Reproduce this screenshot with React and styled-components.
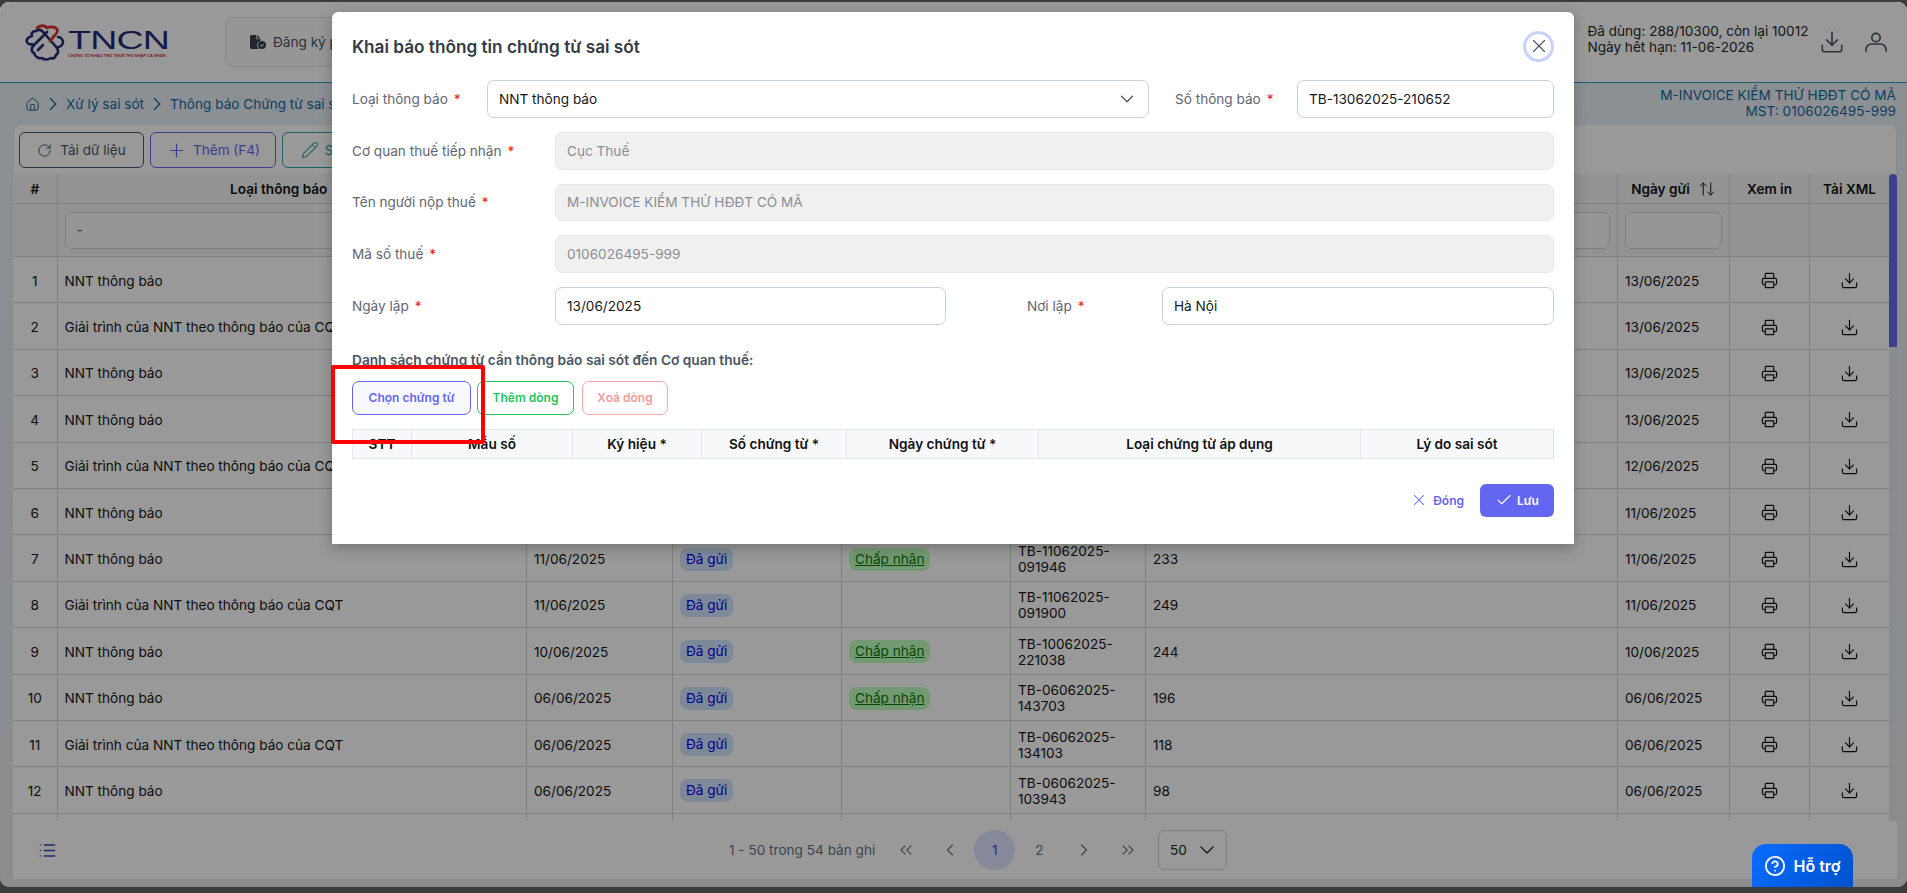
import React from 'react';
import styled, { createGlobalStyle } from 'styled-components';
import {
  Check, ChevronDown, ChevronLeft, ChevronRight, ChevronsLeft, ChevronsRight, CircleHelp,
  Download, House, List, Pencil, Plus, Printer, RotateCw, X, ArrowUpDown,
} from 'lucide-react';
import { FaFileCircleCheck } from 'react-icons/fa6';

const GlobalStyle = createGlobalStyle`
  html, body {
    margin: 0;
    height: 100%;
    background: #3b3c3d;
    overflow: hidden;
  }
  * { box-sizing: border-box; }
  body {
    font-family: Inter, "Noto Sans", sans-serif;
    font-size: 13.6px;
    color: #1a1a1a;
  }
`;

const Frame = styled.div`
  height: 893px;
  padding: 2px 0 6px;
`;

const Page = styled.div`
  position: relative;
  height: 885px;
  border-radius: 9px;
  overflow: hidden;
  display: flex;
  flex-direction: column;
  background: linear-gradient(180deg, #e9f1f8 0%, #e8edf0 40%, #e6eaec 100%);
`;

const Header = styled.header`
  height: 81px;
  flex-shrink: 0;
  background: #fff;
  border-bottom: 1px solid #2f9fd8;
  display: flex;
  align-items: flex-start;
  padding: 15px 18px 0 25px;
`;

const Logo = styled.div`
  width: 200px;
  height: 40px;
  margin-top: 6px;
  display: flex;
  gap: 3px;
`;

const LogoWords = styled.div`
  display: flex;
  flex-direction: column;
  margin-top: 6px;
`;

const LogoName = styled.span`
  font-family: "Liberation Sans", sans-serif;
  font-size: 25px;
  line-height: 22px;
  letter-spacing: -0.5px;
  color: #262a78;
  display: inline-block;
  transform: scaleX(1.5);
  transform-origin: left center;
`;

const LogoSlogan = styled.span`
  font-family: "Liberation Sans", sans-serif;
  font-size: 4px;
  font-weight: 700;
  line-height: 6px;
  margin-top: 2px;
  color: #d8322f;
  white-space: nowrap;
`;

const NavButton = styled.div`
  width: 320px;
  height: 50px;
  border: 1px solid #dfe2e7;
  border-radius: 8px;
  background: #fafafa;
  display: flex;
  align-items: center;
  padding-left: 24px;
  gap: 7px;
  color: #4b5563;
  white-space: nowrap;
  svg { color: #374151; }
`;

const UsageInfo = styled.div`
  margin-left: auto;
  margin-top: 5.5px;
  line-height: 16px;
  color: #26282b;
`;

const HeaderIcons = styled.div`
  display: flex;
  gap: 18px;
  margin: 12px 0 0 10.5px;
  color: #4b5563;
`;

const BreadcrumbBar = styled.div`
  height: 41px;
  flex-shrink: 0;
  display: flex;
  align-items: center;
  justify-content: space-between;
  padding: 0 11px 0 25px;
  color: #16699e;
`;

const Crumbs = styled.nav`
  display: flex;
  align-items: center;
  gap: 2px;
  margin-top: 1px;
`;

const Company = styled.div`
  text-align: right;
  line-height: 16px;
  margin-top: -1px;
`;

const Card = styled.main`
  flex: 1;
  min-height: 0;
  margin: 0 10px 8px 13px;
  display: flex;
  flex-direction: column;
`;

const Toolbar = styled.div`
  height: 50px;
  flex-shrink: 0;
  display: flex;
  gap: 6px;
  padding: 7px 5px;
  background: #fff;
  border: 1px solid #e3e6ea;
  border-bottom: 0;
  border-radius: 8px 8px 0 0;
`;

const ToolButton = styled.button`
  width: ${(p) => p.$w}px;
  height: 36px;
  display: flex;
  align-items: center;
  justify-content: center;
  gap: ${(p) => p.$gap || 8}px;
  padding: 0;
  font: inherit;
  background: #fff;
  color: ${(p) => p.$color};
  border: 1px solid ${(p) => p.$color};
  border-radius: 6px;
`;

const TableArea = styled.div`
  flex: 1;
  min-height: 0;
  display: flex;
`;

const TableClip = styled.div`
  flex: 1;
  overflow: hidden;
  background: #fff;
`;

const ScrollTrack = styled.div`
  width: 8px;
  flex-shrink: 0;
  background: #e4e8ea;
`;

const ScrollThumb = styled.div`
  height: 173px;
  background: #6a6af0;
  border-radius: 5px 5px 0 0;
`;

const Grid = styled.table`
  width: 1876px;
  table-layout: fixed;
  border-collapse: separate;
  border-spacing: 0;
`;

const Th = styled.th`
  height: 30px;
  padding: 0 7px;
  font-weight: 600;
  font-size: 13.6px;
  color: #111;
  background: #f6f6f7;
  border-right: 1px solid #d5d7da;
  border-bottom: 1px solid #d5d7da;
  white-space: nowrap;
  &:last-child { border-right: 0; }
  svg { margin-left: 8px; vertical-align: -4px; }
`;

const FilterCell = styled.td`
  height: 53px;
  padding: 0 7px;
  background: #f6f6f7;
  border-right: 1px solid #d5d7da;
  border-bottom: 1px solid #d5d7da;
  &:last-child { border-right: 0; }
`;

const FilterBox = styled.div`
  height: 37px;
  display: flex;
  align-items: center;
  padding-left: 11px;
  background: #fbfbfc;
  border: 1px solid #d1d5db;
  border-radius: 6px;
  color: #555;
`;

const Td = styled.td`
  height: 46.4px;
  padding: 2px 7px 0;
  font-size: 13.6px;
  line-height: 16px;
  text-align: ${(p) => (p.$center ? 'center' : 'left')};
  color: #141414;
  background: #fff;
  border-right: 1px solid #d5d7da;
  border-bottom: 1px solid #d5d7da;
  &:last-child { border-right: 0; }
  svg { display: block; margin: 0 auto; }
`;

const Pill = styled.span`
  display: inline-block;
  height: 23px;
  padding: 0 6px;
  line-height: 23px;
  border-radius: 8px;
  background: ${(p) => p.$bg};
  color: ${(p) => p.$color};
  text-decoration: ${(p) => (p.$link ? 'underline' : 'none')};
`;

const Footer = styled.footer`
  height: 58px;
  flex-shrink: 0;
  position: relative;
  display: flex;
  align-items: center;
  background: #fff;
  padding: 0 0 0 25px;
  color: #3b3ec4;
`;

const Pager = styled.div`
  position: absolute;
  left: 716px;
  top: 9px;
  display: flex;
  align-items: center;
  color: #6b7280;
`;

const PagerText = styled.span`
  width: 156px;
  white-space: nowrap;
`;

const PageDot = styled.span`
  width: 41px;
  height: 40px;
  margin-right: 3.6px;
  display: flex;
  align-items: center;
  justify-content: center;
  border-radius: 50%;
  background: ${(p) => (p.$active ? '#dfe5ff' : 'transparent')};
  color: ${(p) => (p.$active ? '#4f46e5' : '#6b7280')};
`;

const PageSize = styled.div`
  width: 69px;
  height: 40px;
  margin-left: 5.5px;
  display: flex;
  align-items: center;
  justify-content: space-between;
  padding: 0 7px 0 11px;
  color: #222;
  border: 1px solid #d1d5db;
  border-radius: 6px;
`;

const Backdrop = styled.div`
  position: absolute;
  inset: 0;
  background: rgba(0, 0, 0, 0.4);
`;

const Modal = styled.section`
  position: absolute;
  left: 332px;
  top: 10px;
  width: 1242px;
  height: 532px;
  padding: 0 20px;
  background: #fff;
  border-radius: 6px 6px 0 0;
  box-shadow: 0 4px 14px rgba(0, 0, 0, 0.25);
`;

const ModalHead = styled.div`
  height: 68px;
  display: flex;
  align-items: center;
  justify-content: space-between;
`;

const ModalTitle = styled.h2`
  margin: 0;
  font-size: 17.2px;
  font-weight: 600;
  color: #333a44;
`;

const CloseButton = styled.button`
  width: 31px;
  height: 31px;
  padding: 0;
  display: flex;
  align-items: center;
  justify-content: center;
  background: #fff;
  color: #4b5563;
  border: 3px solid #c7d2fe;
  border-radius: 50%;
`;

const Form = styled.div`
  display: flex;
  flex-direction: column;
  gap: 14px;
`;

const FormRow = styled.div`
  display: flex;
  align-items: center;
`;

const Label = styled.label`
  flex-shrink: 0;
  width: ${(p) => p.$w}px;
  margin-left: ${(p) => p.$ml || 0}px;
  color: #5f6772;
  &::after {
    content: '*';
    margin-left: 6px;
    color: #f01818;
  }
`;

const Field = styled.div`
  flex: ${(p) => (p.$w ? `0 0 ${p.$w}px` : '1')};
  height: 37.75px;
  display: flex;
  align-items: center;
  justify-content: space-between;
  padding: 0 10px 0 11px;
  border: 1px solid ${(p) => (p.$disabled ? '#e6e8ec' : '#ccd0da')};
  border-radius: 7px;
  background: ${(p) => (p.$disabled ? '#f0f0f1' : '#fff')};
  color: ${(p) => (p.$disabled ? '#8a8e94' : '#16181b')};
`;

const SectionLabel = styled.div`
  margin-top: 25px;
  line-height: 20px;
  font-size: 13.7px;
  font-weight: 600;
  color: #4b5563;
`;

const ActionRow = styled.div`
  display: flex;
  gap: 6px;
  margin-top: 11px;
`;

const ActionButton = styled.button`
  width: ${(p) => p.$w}px;
  height: 34px;
  margin-right: ${(p) => p.$mr || 0}px;
  padding: 0;
  font: inherit;
  font-size: 12px;
  font-weight: 600;
  color: ${(p) => p.$color};
  background: ${(p) => p.$bg || '#fff'};
  border: 1px solid ${(p) => p.$border || p.$color};
  border-radius: 7px;
`;

const DetailHead = styled.div`
  display: grid;
  grid-template-columns: 59px 161px 129px 145px 192px 322px 1fr;
  height: 30px;
  margin-top: 14px;
  background: #f7f8fa;
  border: 1px solid #e1e4e9;
`;

const DetailCell = styled.div`
  display: flex;
  align-items: center;
  justify-content: center;
  font-size: 13.6px;
  font-weight: 600;
  color: #111;
  white-space: nowrap;
  border-right: 1px solid #e1e4e9;
  &:last-child { border-right: 0; }
`;

const ModalFooter = styled.div`
  display: flex;
  justify-content: flex-end;
  align-items: center;
  gap: 16px;
  margin-top: 25px;
`;

const CloseLink = styled.span`
  display: flex;
  align-items: center;
  gap: 5px;
  font-size: 12px;
  font-weight: 600;
  color: #6366f1;
`;

const SaveButton = styled.button`
  width: 74px;
  height: 33px;
  display: flex;
  align-items: center;
  justify-content: center;
  gap: 4px;
  padding: 0;
  font: inherit;
  font-size: 12px;
  font-weight: 600;
  color: #fff;
  background: #6366f1;
  border: 0;
  border-radius: 6px;
`;

const RedMark = styled.div`
  position: absolute;
  left: 331px;
  top: 363px;
  width: 154px;
  height: 79px;
  border: 4.5px solid #ff0000;
  border-radius: 2px;
`;

const HelpButton = styled.button`
  position: absolute;
  right: 54px;
  bottom: 0;
  width: 101px;
  height: 43px;
  display: flex;
  align-items: center;
  justify-content: center;
  gap: 7px;
  padding: 0;
  font: inherit;
  font-size: 16px;
  font-weight: 600;
  color: #fff;
  background: linear-gradient(120deg, #0a6cff, #0052cc);
  border: 0;
  border-radius: 14px 14px 0 0;
`;

const columns = [44.5, 469.5, 146, 169, 169, 135, 472, 112, 80, 79];

const GIAI_TRINH = 'Giải trình của NNT theo thông báo của CQT';
const NNT = 'NNT thông báo';

const rows = [
  [NNT, '13/06/2025', true, 'TB-13062025-204511', '301', '13/06/2025'],
  [GIAI_TRINH, '13/06/2025', false, 'TB-13062025-181220', '287', '13/06/2025'],
  [NNT, '13/06/2025', true, 'TB-13062025-103355', '265', '13/06/2025'],
  [NNT, '13/06/2025', true, 'TB-13062025-091702', '263', '13/06/2025'],
  [GIAI_TRINH, '12/06/2025', false, 'TB-12062025-160418', '258', '12/06/2025'],
  [NNT, '11/06/2025', true, 'TB-11062025-104127', '241', '11/06/2025'],
  [NNT, '11/06/2025', true, 'TB-11062025-091946', '233', '11/06/2025'],
  [GIAI_TRINH, '11/06/2025', false, 'TB-11062025-091900', '249', '11/06/2025'],
  [NNT, '10/06/2025', true, 'TB-10062025-221038', '244', '10/06/2025'],
  [NNT, '06/06/2025', true, 'TB-06062025-143703', '196', '06/06/2025'],
  [GIAI_TRINH, '06/06/2025', false, 'TB-06062025-134103', '118', '06/06/2025'],
  [NNT, '06/06/2025', false, 'TB-06062025-103943', '98', '06/06/2025'],
];

const detailHeads = ['STT', 'Mẫu số', 'Ký hiệu *', 'Số chứng từ *', 'Ngày chứng từ *', 'Loại chứng từ áp dụng', 'Lý do sai sót'];

function LogoMark() {
  return (
    <svg width="40" height="38" viewBox="0 0 40 38" fill="none" strokeLinecap="round" strokeLinejoin="round">
      <g stroke="#262a78" strokeWidth="2.6">
        <path d="M11 8c3-2 6-1 8 2l13 15c2 3 1 6-1 7" />
        <path d="M9 30c-3-1-3-5 0-8l13-13" />
        <path d="M11 8C7 8 6 11 7 13c-4 1-6 4-5 6 1 2 3 3 5 2" />
        <path d="M9 30c1 4 5 6 8 5 2 2 6 2 9 0 2 1 4 0 5-3" />
        <path d="M33 14c3 0 5 3 5 5s-2 5-5 5" />
        <path d="M13 27l5-5" />
      </g>
      <path d="M12 5c3-3 8-3 10 0 3-2 8-1 10 1 1 2 0 4-2 6l-5 6" stroke="#d8322f" strokeWidth="2.8" />
    </svg>
  );
}

function UserIcon() {
  return (
    <svg width="26" height="26" viewBox="0 0 26 26" fill="none" stroke="currentColor" strokeWidth="1.7" strokeLinecap="round">
      <circle cx="13" cy="8.5" r="4.2" />
      <path d="M3 22v-1.5a5.5 5.5 0 0 1 5.5-5.5h9a5.5 5.5 0 0 1 5.5 5.5V22" />
    </svg>
  );
}

export default function App() {
  return (
    <>
      <GlobalStyle />
      <Frame>
        <Page>
          <Header>
            <Logo>
              <LogoMark />
              <LogoWords>
                <LogoName>TNCN</LogoName>
                <LogoSlogan>CHỨNG TỪ KHẤU TRỪ THUẾ THU NHẬP CÁ NHÂN</LogoSlogan>
              </LogoWords>
            </Logo>
            <NavButton>
              <FaFileCircleCheck size={16} />
              Đăng ký phát hành
            </NavButton>
            <UsageInfo>
              Đã dùng: 288/10300, còn lại 10012
              <br />
              Ngày hết hạn: 11-06-2026
            </UsageInfo>
            <HeaderIcons>
              <Download size={26} strokeWidth={1.5} />
              <UserIcon />
            </HeaderIcons>
          </Header>

          <BreadcrumbBar>
            <Crumbs>
              <House size={15} strokeWidth={1.6} />
              <ChevronRight size={22} strokeWidth={1.4} />
              <span>Xử lý sai sót</span>
              <ChevronRight size={22} strokeWidth={1.4} />
              <span>Thông báo Chứng từ sai sót</span>
            </Crumbs>
            <Company>
              M-INVOICE KIỂM THỬ HĐĐT CÓ MÃ
              <br />
              MST: 0106026495-999
            </Company>
          </BreadcrumbBar>

          <Card>
            <Toolbar>
              <ToolButton $w={125} $color="#4b5563">
                <RotateCw size={15} strokeWidth={1.6} /> Tải dữ liệu
              </ToolButton>
              <ToolButton $w={126} $gap={6} $color="#6366f1">
                <Plus size={21} strokeWidth={1.4} /> Thêm (F4)
              </ToolButton>
              <ToolButton $w={116} $gap={6} $color="#2ba3ad">
                <Pencil size={18} strokeWidth={1.4} /> Sửa (F3)
              </ToolButton>
            </Toolbar>

            <TableArea>
              <TableClip>
                <Grid>
                  <colgroup>
                    {columns.map((w, i) => (
                      <col key={i} style={{ width: w }} />
                    ))}
                  </colgroup>
                  <thead>
                    <tr>
                      <Th>#</Th>
                      <Th>
                        Loại thông báo
                        <ArrowUpDown size={18} strokeWidth={1.3} />
                      </Th>
                      <Th>Ngày lập</Th>
                      <Th>Trạng thái</Th>
                      <Th>Trạng thái CQT</Th>
                      <Th>Số thông báo</Th>
                      <Th>Mã giao dịch</Th>
                      <Th>
                        Ngày gửi
                        <ArrowUpDown size={18} strokeWidth={1.3} />
                      </Th>
                      <Th>Xem in</Th>
                      <Th>Tải XML</Th>
                    </tr>
                    <tr>
                      <FilterCell />
                      <FilterCell><FilterBox>-</FilterBox></FilterCell>
                      <FilterCell><FilterBox /></FilterCell>
                      <FilterCell><FilterBox /></FilterCell>
                      <FilterCell><FilterBox /></FilterCell>
                      <FilterCell><FilterBox /></FilterCell>
                      <FilterCell><FilterBox /></FilterCell>
                      <FilterCell><FilterBox /></FilterCell>
                      <FilterCell />
                      <FilterCell />
                    </tr>
                  </thead>
                  <tbody>
                    {rows.map((row, i) => (
                      <tr key={i}>
                        <Td $center>{i + 1}</Td>
                        <Td>{row[0]}</Td>
                        <Td>{row[1]}</Td>
                        <Td><Pill $bg="#d0e4ff" $color="#0000ee">Đã gửi</Pill></Td>
                        <Td>{row[2] && <Pill $bg="#c0ffc0" $color="#067a06" $link>Chấp nhận</Pill>}</Td>
                        <Td>{row[3]}</Td>
                        <Td>{row[4]}</Td>
                        <Td>{row[5]}</Td>
                        <Td $center><Printer size={17} strokeWidth={1.7} /></Td>
                        <Td $center><Download size={19} strokeWidth={1.5} /></Td>
                      </tr>
                    ))}
                    <tr>
                      {columns.map((w, i) => (
                        <Td key={i} />
                      ))}
                    </tr>
                  </tbody>
                </Grid>
              </TableClip>
              <ScrollTrack>
                <ScrollThumb />
              </ScrollTrack>
            </TableArea>

            <Footer>
              <List size={19} strokeWidth={1.7} />
              <Pager>
                <PagerText>1 - 50 trong 54 bản ghi</PagerText>
                <PageDot><ChevronsLeft size={20} strokeWidth={1.3} /></PageDot>
                <PageDot><ChevronLeft size={20} strokeWidth={1.3} /></PageDot>
                <PageDot $active>1</PageDot>
                <PageDot>2</PageDot>
                <PageDot><ChevronRight size={20} strokeWidth={1.3} /></PageDot>
                <PageDot><ChevronsRight size={20} strokeWidth={1.3} /></PageDot>
                <PageSize>
                  50
                  <ChevronDown size={24} strokeWidth={1.3} />
                </PageSize>
              </Pager>
            </Footer>
          </Card>

          <Backdrop />

          <Modal>
            <ModalHead>
              <ModalTitle>Khai báo thông tin chứng từ sai sót</ModalTitle>
              <CloseButton>
                <X size={22} strokeWidth={1.2} />
              </CloseButton>
            </ModalHead>

            <Form>
              <FormRow>
                <Label $w={135}>Loại thông báo</Label>
                <Field>
                  NNT thông báo
                  <ChevronDown size={22} strokeWidth={1.4} color="#4b5563" />
                </Field>
                <Label $w={122} $ml={26}>Số thông báo</Label>
                <Field $w={257}>TB-13062025-210652</Field>
              </FormRow>
              <FormRow>
                <Label $w={203}>Cơ quan thuế tiếp nhận</Label>
                <Field $disabled>Cục Thuế</Field>
              </FormRow>
              <FormRow>
                <Label $w={203}>Tên người nộp thuế</Label>
                <Field $disabled>M-INVOICE KIỂM THỬ HĐĐT CÓ MÃ</Field>
              </FormRow>
              <FormRow>
                <Label $w={203}>Mã số thuế</Label>
                <Field $disabled>0106026495-999</Field>
              </FormRow>
              <FormRow>
                <Label $w={203}>Ngày lập</Label>
                <Field $w={391}>13/06/2025</Field>
                <Label $w={135} $ml={81}>Nơi lập</Label>
                <Field>Hà Nội</Field>
              </FormRow>
            </Form>

            <SectionLabel>Danh sách chứng từ cần thông báo sai sót đến Cơ quan thuế:</SectionLabel>
            <ActionRow>
              <ActionButton $w={119} $color="#6366f1" $bg="#f8f8ff">Chọn chứng từ</ActionButton>
              <ActionButton $w={97} $mr={2} $color="#22c55e">Thêm dòng</ActionButton>
              <ActionButton $w={86} $color="#f79a9a" $border="#f9a8a8">Xoá dòng</ActionButton>
            </ActionRow>

            <DetailHead>
              {detailHeads.map((h) => (
                <DetailCell key={h}>{h}</DetailCell>
              ))}
            </DetailHead>

            <ModalFooter>
              <CloseLink>
                <X size={18} strokeWidth={1.4} /> Đóng
              </CloseLink>
              <SaveButton>
                <Check size={18} strokeWidth={1.5} /> Lưu
              </SaveButton>
            </ModalFooter>
          </Modal>

          <RedMark />

          <HelpButton>
            <CircleHelp size={22} strokeWidth={2} /> Hỗ trợ
          </HelpButton>
        </Page>
      </Frame>
    </>
  );
}
